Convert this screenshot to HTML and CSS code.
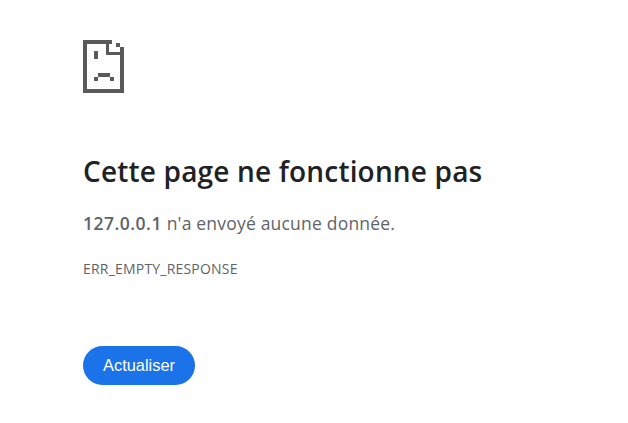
FILE: index.html
```html
<!DOCTYPE html>
<html lang="fr">
<head>
  <meta charset="UTF-8">
  <meta name="viewport" content="width=device-width, initial-scale=1.0">
  <title>127.0.0.1</title>
  <link rel="stylesheet" href="styles.css">
</head>
<body>
  <main class="error-page">
    <svg class="sad-doc" width="42" height="53" viewBox="0 0 42 53" fill="#5a5a5c" aria-hidden="true">
      <rect x="0" y="0" width="29" height="4"/>
      <rect x="0" y="0" width="4" height="53"/>
      <rect x="0" y="49" width="41" height="4"/>
      <rect x="37" y="7" width="4" height="46"/>
      <rect x="23" y="0" width="3" height="15"/>
      <rect x="23" y="12" width="18" height="3"/>
      <rect x="33" y="3" width="4" height="4"/>
      <rect x="11" y="11" width="4" height="8"/>
      <rect x="15" y="33" width="12" height="4"/>
      <rect x="11" y="37" width="4" height="4"/>
      <rect x="27" y="37" width="4" height="4"/>
    </svg>
    <h1>Cette page ne fonctionne pas</h1>
    <p class="summary"><strong>127.0.0.1</strong> n'a envoyé aucune donnée.</p>
    <div class="error-code">ERR_EMPTY_RESPONSE</div>
    <button class="reload-button">Actualiser</button>
  </main>
</body>
</html>
```

FILE: styles.css
```css
body {
  margin: 0;
  background-color: #fff;
  font-family: "Open Sans", sans-serif;
  color: #5f6368;
}
.error-page {
  display: flex;
  flex-direction: column;
  align-items: flex-start;
  padding: 40px 0 0 83px;
}
.sad-doc {
  display: block;
}
h1 {
  margin: 59px 0 0;
  font-size: 28px;
  font-weight: 600;
  line-height: 38px;
  letter-spacing: 0.18px;
  color: #202124;
}
.summary {
  margin: 22px 0 0;
  font-size: 17.5px;
  line-height: 22px;
  letter-spacing: 0.2px;
}
.summary strong {
  font-weight: 600;
  letter-spacing: 0.5px;
}
.error-code {
  margin-top: 27px;
  font-size: 14px;
  line-height: 16px;
  letter-spacing: 0.2px;
}
.reload-button {
  margin-top: 69px;
  padding: 0 20px;
  height: 39px;
  background-color: #1a73e8;
  color: #fff;
  border: none;
  border-radius: 20px;
  font-family: "Liberation Sans", Arial, sans-serif;
  font-size: 16.4px;
  cursor: pointer;
}
```
